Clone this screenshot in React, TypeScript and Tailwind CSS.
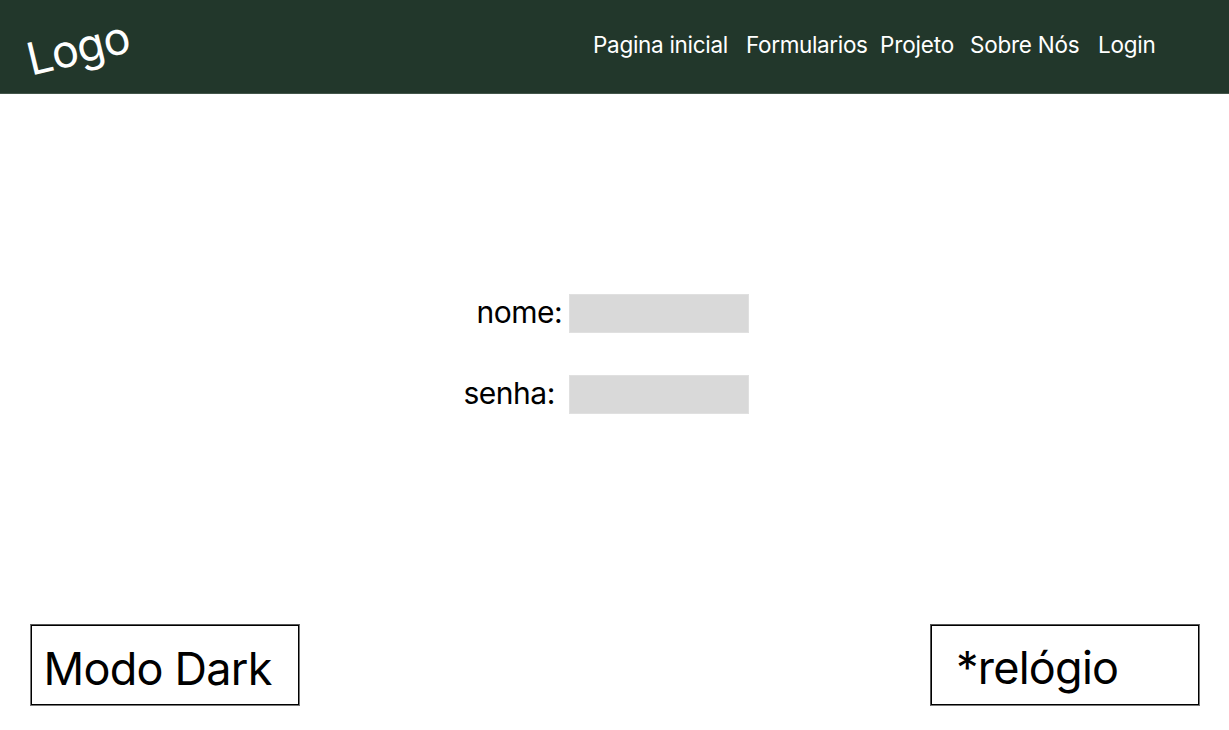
const links = [
  { label: "Pagina inicial", cls: "w-[153px] tracking-[-0.3px]" },
  { label: "Formularios", cls: "w-[134px] tracking-[-0.35px]" },
  { label: "Projeto", cls: "w-[90px] tracking-[-0.15px]" },
  { label: "Sobre Nós", cls: "w-[128px] tracking-[-0.25px]" },
  { label: "Login", cls: "w-[60px] tracking-[-0.25px]" },
];

export default function App() {
  return (
    <div className="flex h-[730px] w-[1229px] flex-col overflow-hidden bg-white font-['Inter',sans-serif] text-black">
      <header className="flex h-[94px] shrink-0 items-start justify-between border-b border-[#43554a] bg-[#22372b] text-white">
        <div className="ml-[26px] mt-[21px] origin-center -rotate-[13.5deg] text-[45px] leading-[54px] tracking-[-0.8px]">Logo</div>
        <nav className="mr-[71px] mt-[31px] flex text-[22.5px] leading-[27px]">
          {links.map((l) => (
            <a key={l.label} className={"whitespace-nowrap " + l.cls}>{l.label}</a>
          ))}
        </nav>
      </header>
      <main className="flex flex-1 flex-col pl-[463px] pt-[200px] text-[30px] leading-[36px] tracking-[-0.5px]">
        <label className="flex h-[39px]">
          <span className="w-[106px] pl-[13.5px]">nome:</span>
          <span className="h-[39px] w-[180px] border border-[#e0e0e0] bg-[#d9d9d9]" />
        </label>
        <label className="mt-[42px] flex h-[39px]">
          <span className="w-[106px] pl-[0.5px]">senha:</span>
          <span className="h-[39px] w-[180px] border border-[#e0e0e0] bg-[#d9d9d9]" />
        </label>
      </main>
      <footer className="flex shrink-0 justify-between pb-[24px] pl-[30px] pr-[29px] text-[45px] leading-[54px] tracking-[-0.75px]">
        <button className="flex h-[82px] w-[270px] border border-[#777] border-t-[#555] pl-[12.5px] pt-[17px] shadow-[inset_0_0_0_1px_#000]">Modo Dark</button>
        <div className="h-[82px] w-[270px] border border-[#777] border-l-[#555] border-t-[#555] pl-[25px] pt-[16px] shadow-[inset_0_0_0_1px_#000]">*relógio</div>
      </footer>
    </div>
  );
}
